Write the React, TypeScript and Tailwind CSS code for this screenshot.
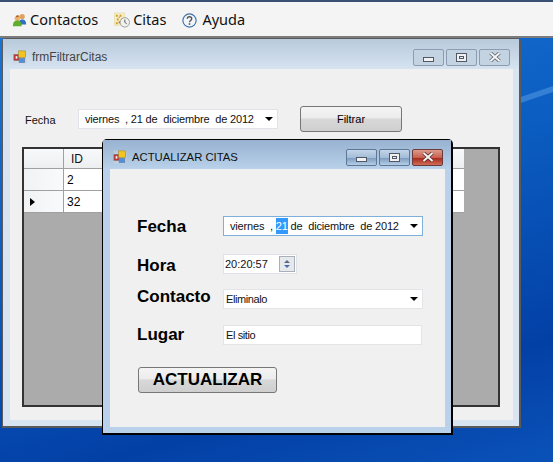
import React from "react";

function AppIcon() {
  return (
    <svg width="14" height="14" viewBox="0 0 16 16" className="shrink-0">
      <rect x="0.500" y="0.500" width="15" height="15" fill="#cfd6de" opacity="0.5" />
      <rect x="1" y="5" width="6" height="7" fill="#c9302a" stroke="#777" strokeWidth="0.700" />
      <rect x="3" y="7" width="2" height="3" fill="#eee" />
      <rect x="6.500" y="1" width="8" height="7.500" fill="#f3c320" stroke="#9a8a40" strokeWidth="0.700" />
      <rect x="7" y="9.500" width="6.500" height="5" fill="#4f8fe0" stroke="#66809f" strokeWidth="0.700" />
    </svg>
  );
}

function ContactsIcon() {
  return (
    <svg width="15" height="15" viewBox="0 0 17 17" className="shrink-0">
      <circle cx="11.500" cy="4" r="3" fill="#e0a060" />
      <path d="M7.500 13c0-4 1.500-5.500 4-5.500s4.500 1.500 4.500 5.500z" fill="#2f6fc4" />
      <circle cx="6" cy="6" r="3" fill="#eeb070" />
      <path d="M1 15c0-5 2-6.500 5-6.500s5 1.500 5 6.500z" fill="#5fae2e" />
      <path d="M4.500 3.500c1-1.500 3-1.500 4 .3L5 5z" fill="#a8641f" />
    </svg>
  );
}

function CitasIcon() {
  return (
    <svg width="16" height="16" viewBox="0 0 17 17" className="shrink-0">
      <rect x="0.500" y="1" width="11" height="13" fill="#f5edc8" stroke="#e2d6a4" strokeWidth="0.600" />
      <path d="M2 3h2v2H2zM6 3h2v2H6zM3 7h2v2H3zM2 11h2v2H2z" fill="#d0a020" />
      <path d="M5 5h1v1H5zM8 7h1v1H8zM5 10h2v2H5z" fill="#c04a30" />
      <circle cx="11.500" cy="11" r="5" fill="#f1f1ee" stroke="#9c9c94" strokeWidth="1" />
      <path d="M11.500 8v3l2 1.500" fill="none" stroke="#444" strokeWidth="0.900" />
    </svg>
  );
}

function HelpIcon() {
  return (
    <svg width="15" height="15" viewBox="0 0 17 17" className="shrink-0">
      <circle cx="8.500" cy="8.500" r="7.500" fill="#f2f6fb" stroke="#3f6fa8" strokeWidth="1.300" />
      <path d="M6 6.500c0-3 5-3 5 0 0 2-2.500 2-2.500 4" fill="none" stroke="#555" strokeWidth="1.600" />
      <rect x="7.600" y="11.600" width="1.800" height="1.800" fill="#555" />
    </svg>
  );
}

function MenuItem({ icon, label, gap }: { icon: React.ReactNode; label: string; gap: string }) {
  return (
    <div className={`flex items-center ${gap}`}>
      {icon}
      <span>{label}</span>
    </div>
  );
}

function CaptionButton({ kind, active }: { kind: "min" | "max" | "close"; active?: boolean }) {
  const tone = active
    ? "border-[#5d7896] bg-[linear-gradient(#c3d5e8_0%,#a3bcd7_50%,#7f9dc0_55%,#b5cde6_100%)]"
    : "border-[#8d9cb0] bg-[#c4d3e2]";
  const closeTone = active
    ? "border-[#6d3a3a] bg-[linear-gradient(#dc9b8d_0%,#c9604f_50%,#a8291a_55%,#cf6d58_100%)]"
    : "border-[#8d9cb0] bg-[#c4d3e2]";
  return (
    <div
      className={`flex h-[17px] w-[31px] items-center justify-center rounded-[2px] border ${
        kind === "close" ? closeTone : tone
      }`}
    >
      {kind === "min" && (
        <div className="mt-[5px] h-[5px] w-[11px] border border-[#4f5866] bg-[#f2f2f2]" />
      )}
      {kind === "max" && (
        <div className="flex h-[9px] w-[11px] items-center justify-center border border-[#4f5866] bg-[#f0f0f0]">
          <div className="h-[3px] w-[5px] border border-[#4f5866]" />
        </div>
      )}
      {kind === "close" && (
        <svg width="12" height="10" viewBox="0 0 12 10">
          <path
            d="M1.500 1 L10.500 9 M10.500 1 L1.500 9"
            stroke={active ? "#5a2a28" : "#5a6470"}
            strokeWidth="3.600"
          />
          <path d="M1.500 1 L10.500 9 M10.500 1 L1.500 9" stroke="#f4f4f4" strokeWidth="2" />
        </svg>
      )}
    </div>
  );
}

function DateField({ focused, className }: { focused?: boolean; className: string }) {
  return (
    <div
      className={`flex items-center whitespace-pre bg-white pl-[6px] text-[11px] tracking-[-0.17px] text-[#111] ${className}`}
    >
      <span>viernes  , </span>
      <span className={focused ? "bg-[#3399ff] text-white" : ""}>21</span>
      <span> de  diciembre  de 2012</span>
      <Arrow />
    </div>
  );
}

function Arrow() {
  return (
    <div className="ml-auto mr-[4px] h-0 w-0 border-x-[4px] border-t-[4px] border-x-transparent border-t-black" />
  );
}

function WinButton({ label, className }: { label: string; className: string }) {
  return (
    <div
      className={`flex items-center justify-center rounded-[3px] border border-[#777] bg-[linear-gradient(#f4f4f4_0%,#ececec_45%,#d8d8d8_50%,#cfcfcf_100%)] text-black ${className}`}
    >
      {label}
    </div>
  );
}

function GridRow({ id, current }: { id: string; current?: boolean }) {
  return (
    <div className="flex h-[22px] border-b border-[#a0a0a0]">
      <div className="flex w-[40px] items-center border-r border-[#a0a0a0] bg-[linear-gradient(90deg,#f1f2f4,#f9fafb)] pl-[6px]">
        {current && (
          <div className="h-0 w-0 border-y-[4px] border-l-[5px] border-y-transparent border-l-black" />
        )}
      </div>
      <div className="flex flex-1 items-center bg-white pl-[3px] text-[12px] text-black">{id}</div>
    </div>
  );
}

export default function App() {
  return (
    <div
      className="relative h-[462px] w-[553px] overflow-hidden bg-[linear-gradient(165deg,#1c78d8_0%,#0b5cc0_45%,#0340a6_80%,#0a52b8_100%)]"
      style={{ fontFamily: '"Liberation Sans", Arial, sans-serif' }}
    >
      {/* wallpaper streak */}
      <svg width="553" height="462" className="absolute left-0 top-0">
        <path d="M500 104 L553 86 L553 92 L500 110z" fill="#5b9fe6" opacity="0.500" />
      </svg>

      {/* Menu */}
      <div
        className="relative flex h-[38px] items-center gap-[16px] border-b-2 border-t-2 border-b-[#7c7c7c] border-t-[#3a4f74] bg-[#f4f4f4] pl-[12px] pt-[2px] text-[14.500px] text-[#111]"
        style={{ fontFamily: '"Noto Sans", sans-serif' }}
      >
        <MenuItem icon={<ContactsIcon />} label="Contactos" gap="gap-[3px]" />
        <MenuItem icon={<CitasIcon />} label="Citas" gap="gap-[3px]" />
        <MenuItem icon={<HelpIcon />} label="Ayuda" gap="gap-[5px]" />
      </div>

      {/* frmFiltrarCitas */}
      <div className="relative ml-[2px] h-[390px] w-[519px] rounded-t-[4px] border border-b-2 border-r-2 border-[#5a5a5a] bg-[#d8e4f2]">
        <div className="flex h-[30px] items-center bg-[linear-gradient(#b8cadb,#d6e3f1)] pl-[10px] pr-[9px] pt-[6px] text-[12px] text-[#444]">
          <AppIcon />
          <span className="ml-[5px]">frmFiltrarCitas</span>
          <div className="ml-auto flex gap-[2px]">
            <CaptionButton kind="min" />
            <CaptionButton kind="max" />
            <CaptionButton kind="close" />
          </div>
        </div>
        <div className="mx-[7px] h-[351px] w-[503px] bg-[#f0f0f0]">
          <div className="flex items-center pl-[15px] pt-[37px] text-[11px] text-[#111]">
            <span className="mt-[3px] w-[53px]">Fecha</span>
            <DateField className="h-[20px] w-[200px] border border-[#e0e4ea]" />
            <WinButton label="Filtrar" className="ml-[22px] h-[26px] w-[102px]" />
          </div>
          <div className="ml-[12px] mt-[15px] h-[260px] w-[478px] border-2 border-[#333] bg-[#ababab]">
            <div className="w-[440px]">
              <div className="flex h-[20px] border-b border-[#a0a0a0] bg-[linear-gradient(#f8f9fa,#eceef0)] text-[12px] text-[#111]">
                <div className="w-[40px] border-r border-[#a0a0a0]" />
                <div className="flex items-center pl-[7px]">ID</div>
              </div>
              <GridRow id="2" />
              <GridRow id="32" current />
            </div>
          </div>
        </div>
      </div>

      {/* ACTUALIZAR CITAS */}
      <div className="absolute left-[102px] top-[139px] h-[296px] w-[351px] rounded-t-[5px] border border-b-2 border-r-2 border-black bg-[#b9d1ea]">
        <div className="flex h-[29px] items-center bg-[linear-gradient(#97b2d0,#b9d1ea)] pl-[10px] pr-[8px] pt-[5px] text-[11.300px] text-[#111]">
          <AppIcon />
          <span className="ml-[5px]">ACTUALIZAR CITAS</span>
          <div className="ml-auto flex gap-[2px]">
            <CaptionButton kind="min" active />
            <CaptionButton kind="max" active />
            <CaptionButton kind="close" active />
          </div>
        </div>
        <div className="mx-[7px] h-[258px] w-[335px] bg-[#f0f0f0] pl-[27px] pt-[47px]">
          <div className="flex h-[20px] items-center">
            <span className="mt-[2px] w-[86px] text-[17px] font-bold text-black">Fecha</span>
            <DateField focused className="h-[20px] w-[200px] border border-[#7fb0dc]" />
          </div>
          <div className="mt-[18px] flex h-[20px] items-center">
            <span className="mt-[4px] w-[86px] text-[17px] font-bold text-black">Hora</span>
            <div className="flex h-[20px] w-[74px] items-center border border-[#dfe3e8] bg-white pl-[1px] text-[11px] text-[#111]">
              20:20:57
              <div className="ml-auto mr-[1px] flex h-[16px] w-[16px] flex-col items-center justify-center gap-[2px] border border-[#a8b0bb] bg-[#e6e8ec]">
                <div className="h-0 w-0 border-x-[3px] border-b-[3px] border-x-transparent border-b-[#5a6a8a]" />
                <div className="h-0 w-0 border-x-[3px] border-t-[3px] border-x-transparent border-t-[#4a6ab8]" />
              </div>
            </div>
          </div>
          <div className="mt-[15px] flex h-[20px] items-center">
            <span className="mb-[4px] w-[86px] text-[17px] font-bold text-black">Contacto</span>
            <div className="flex h-[20px] w-[200px] items-center border border-[#e2e4e8] bg-white pl-[2px] text-[11px] tracking-[-0.4px] text-[#111]">
              Eliminalo
              <Arrow />
            </div>
          </div>
          <div className="mt-[16px] flex h-[20px] items-center">
            <span className="w-[86px] text-[17px] font-bold text-black">Lugar</span>
            <div className="flex h-[20px] w-[199px] items-center border border-[#e2e4e8] bg-white pl-[2px] text-[11px] tracking-[-0.4px] text-[#111]">
              El sitio
            </div>
          </div>
          <WinButton
            label="ACTUALIZAR"
            className="ml-[1px] mt-[22px] h-[26px] w-[139px] text-[17px] font-bold"
          />
        </div>
      </div>
    </div>
  );
}
